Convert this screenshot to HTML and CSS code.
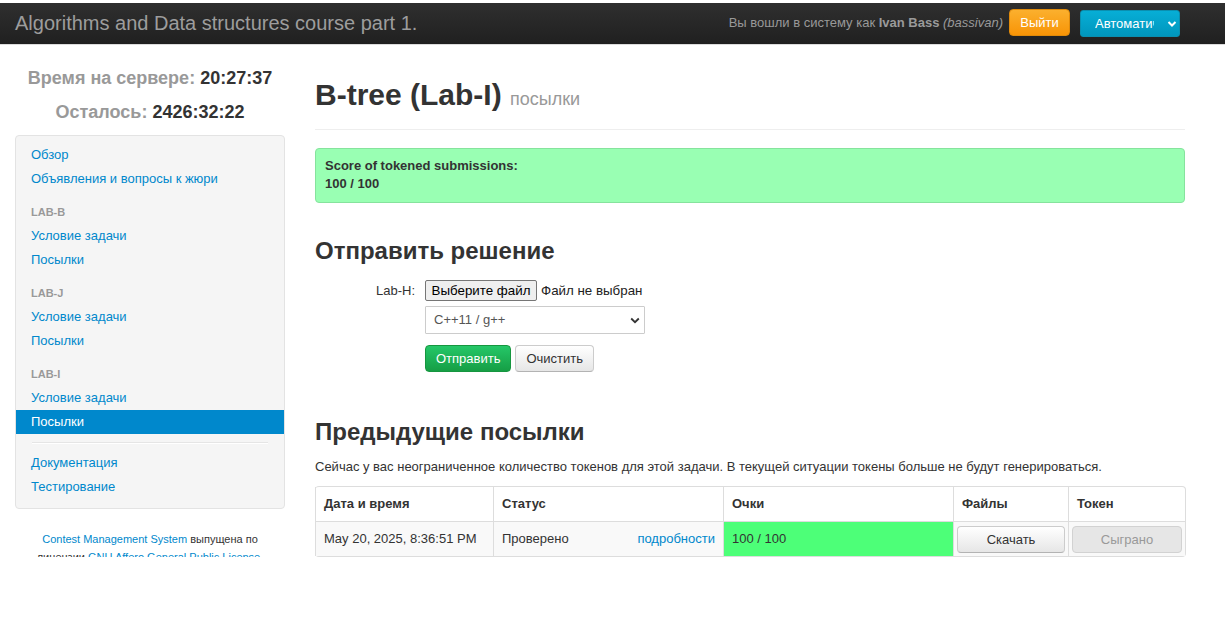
FILE: index.html
```html
<!DOCTYPE html>
<html lang="ru">
<head>
<meta charset="utf-8">
<title>B-tree (Lab-I)</title>
<link rel="stylesheet" href="styles.css">
</head>
<body>
<div class="navbar">
  <div class="brand">Algorithms and Data structures course part 1.</div>
  <div class="nav-right">
    <span class="login-text">Вы вошли в систему как <b>Ivan Bass</b> <i>(bassivan)</i></span>
    <span class="btn-warning">Выйти</span>
    <span class="lang-select"><span class="lang-text">Автоматически</span><svg class="lang-chev" width="10" height="8" viewBox="0 0 10 8"><path d="M1.5 2 L5 5.5 L8.5 2" fill="none" stroke="#fff" stroke-width="2"/></svg></span>
  </div>
</div>

<div class="layout">
  <div class="sidebar">
    <div class="timer"><span class="timer-label">Время на сервере:</span> <span class="timer-value">20:27:37</span></div>
    <div class="timer"><span class="timer-label">Осталось:</span> <span class="timer-value">2426:32:22</span></div>
    <div class="well">
      <a class="nav-item" href="#">Обзор</a>
      <a class="nav-item" href="#">Объявления и вопросы к жюри</a>
      <div class="nav-header">LAB-B</div>
      <a class="nav-item" href="#">Условие задачи</a>
      <a class="nav-item" href="#">Посылки</a>
      <div class="nav-header">LAB-J</div>
      <a class="nav-item" href="#">Условие задачи</a>
      <a class="nav-item" href="#">Посылки</a>
      <div class="nav-header">LAB-I</div>
      <a class="nav-item" href="#">Условие задачи</a>
      <a class="nav-item active" href="#">Посылки</a>
      <div class="divider"></div>
      <a class="nav-item" href="#">Документация</a>
      <a class="nav-item" href="#">Тестирование</a>
    </div>
    <div class="footer">
      <a href="#">Contest Management System</a> выпущена по лицензии <a href="#">GNU Affero General Public License</a>.
    </div>
  </div>

  <div class="main">
    <div class="page-header">
      <h1>B-tree (Lab-I) <small>посылки</small></h1>
    </div>

    <div class="alert">
      <div>Score of tokened submissions:</div>
      <div>100 / 100</div>
    </div>

    <h2 class="section-title first">Отправить решение</h2>
    <div class="form">
      <div class="form-row">
        <label class="form-label">Lab-H:</label>
        <div class="form-field">
          <span class="file-btn">Выберите файл</span>
          <span class="file-text">Файл не выбран</span>
        </div>
      </div>
      <div class="form-row row-select">
        <div class="form-label"></div>
        <div class="select">
          <span>C++11 / g++</span>
          <svg width="10" height="7" viewBox="0 0 10 7"><path d="M1.2 1.5 L5 5.2 L8.8 1.5" fill="none" stroke="#333" stroke-width="1.8"/></svg>
        </div>
      </div>
      <div class="form-row row-buttons">
        <div class="form-label"></div>
        <div class="buttons">
          <span class="btn btn-success">Отправить</span>
          <span class="btn">Очистить</span>
        </div>
      </div>
    </div>

    <h2 class="section-title second">Предыдущие посылки</h2>
    <p class="tokens-note">Сейчас у вас неограниченное количество токенов для этой задачи. В текущей ситуации токены больше не будут генерироваться.</p>

    <table class="subs">
      <colgroup>
        <col class="c-date"><col class="c-status"><col class="c-score"><col class="c-files"><col class="c-token">
      </colgroup>
      <thead>
        <tr><th>Дата и время</th><th>Статус</th><th>Очки</th><th>Файлы</th><th>Токен</th></tr>
      </thead>
      <tbody>
        <tr>
          <td>May 20, 2025, 8:36:51 PM</td>
          <td><div class="status"><span>Проверено</span><a href="#">подробности</a></div></td>
          <td class="score">100 / 100</td>
          <td class="btn-cell"><span class="btn btn-block">Скачать</span></td>
          <td class="btn-cell"><span class="btn btn-block disabled">Сыграно</span></td>
        </tr>
      </tbody>
    </table>
  </div>
</div>
</body>
</html>
```

FILE: styles.css
```css
html, body {
  margin: 0;
  padding: 0;
  background: #fff;
}
body {
  font-family: "Liberation Sans", Arial, Helvetica, sans-serif;
  font-size: 13px;
  line-height: 18px;
  color: #333;
}
a {
  color: #0088cc;
  text-decoration: none;
}

/* navbar */
.navbar {
  margin-top: 3px;
  height: 41px;
  background: linear-gradient(#2f2f2f, #202020);
  border-bottom: 1px solid #dcdcdc;
  display: flex;
  align-items: center;
  justify-content: space-between;
  padding: 0 45px 0 15px;
}
.brand {
  font-size: 20px;
  color: #9d9d9d;
  line-height: 24px;
  margin-top: -2px;
}
.nav-right {
  display: flex;
  align-items: center;
}
.login-text {
  color: #999;
  font-size: 13px;
  margin-right: 6px;
  margin-top: -2px;
}
.login-text b { color: #9a9a9a; }
.btn-warning {
  display: inline-block;
  box-sizing: border-box;
  width: 61px;
  height: 27px;
  line-height: 25px;
  text-align: center;
  color: #fff;
  font-size: 13px;
  background: linear-gradient(#fbb02e, #f89406);
  border: 1px solid #e08a0a;
  border-radius: 4px;
  margin-top: -3px;
}
.lang-select {
  display: inline-flex;
  align-items: center;
  box-sizing: border-box;
  width: 100px;
  height: 27px;
  margin-left: 10px;
  padding-left: 14px;
  background: linear-gradient(#07aed6, #0096bd);
  border: 1px solid #0a8fb0;
  border-radius: 3px;
  color: #fff;
  font-size: 13px;
}
.lang-text {
  width: 59px;
  overflow: hidden;
  white-space: nowrap;
}
.lang-chev {
  margin-left: 13px;
}

/* layout */
.layout {
  display: flex;
  gap: 30px;
  padding: 0 15px;
  height: 512px;
  overflow: hidden;
}
.sidebar {
  width: 270px;
  flex: none;
  padding-top: 16px;
}
.main {
  width: 870px;
  flex: none;
}

/* timers */
.timer {
  text-align: center;
  font-size: 18px;
  font-weight: bold;
  line-height: 34px;
}
.timer-label { color: #999; }
.timer-value { color: #333; }

/* well */
.well {
  margin-top: 6px;
  background: #f5f5f5;
  border: 1px solid #e3e3e3;
  border-radius: 4px;
  padding: 7px 0 9px;
}
.nav-item {
  display: block;
  padding: 3px 15px;
  line-height: 18px;
  color: #0088cc;
}
.nav-item.active {
  background: #0088cc;
  color: #fff;
}
.nav-header {
  margin-top: 9px;
  padding: 3px 15px;
  font-size: 11px;
  font-weight: bold;
  line-height: 18px;
  color: #999;
  text-transform: uppercase;
  text-shadow: 0 1px 0 rgba(255,255,255,.5);
}
.divider {
  height: 1px;
  margin: 8px 16px 7px;
  background: #e5e5e5;
  border-bottom: 1px solid #fff;
}
.footer {
  margin-top: 21px;
  text-align: center;
  font-size: 11px;
  line-height: 18px;
  padding: 0 10px;
}

/* main */
.page-header {
  margin-top: 30px;
  padding-bottom: 10px;
  border-bottom: 1px solid #eee;
}
h1 {
  margin: 0;
  font-size: 30px;
  line-height: 40px;
  font-weight: bold;
  color: #333;
}
h1 small {
  font-size: 18px;
  font-weight: normal;
  color: #999;
}
.alert {
  margin-top: 18px;
  background: #99ffb3;
  border: 1px solid #86e39d;
  border-radius: 4px;
  padding: 8px 9px 9px;
  font-weight: bold;
  color: #333;
}
.section-title {
  margin: 0;
  font-size: 24px;
  line-height: 30px;
  font-weight: bold;
  color: #333;
}
.section-title.first { margin-top: 33px; }
.section-title.second { margin-top: 45px; }

/* form */
.form { margin-top: 14px; }
.form-row {
  display: flex;
  align-items: center;
  gap: 10px;
}
.form-label {
  width: 100px;
  text-align: right;
  color: #333;
}
.form-field {
  display: flex;
  align-items: center;
}
.file-btn {
  display: inline-block;
  box-sizing: border-box;
  width: 112px;
  height: 21px;
  line-height: 19px;
  text-align: center;
  background: #efefef;
  border: 1px solid #767676;
  border-radius: 2px;
  color: #000;
  font-size: 13.33px;
}
.file-text {
  margin-left: 4px;
  font-size: 13.33px;
  color: #222;
}
.row-select { margin-top: 5px; }
.select {
  box-sizing: border-box;
  width: 220px;
  height: 28px;
  border: 1px solid #ccc;
  border-radius: 1px;
  background: #fff;
  display: flex;
  align-items: center;
  justify-content: space-between;
  padding: 0 4px 0 8px;
  color: #555;
}
.row-buttons { margin-top: 11px; }
.buttons {
  display: flex;
  gap: 4px;
}
.btn {
  display: inline-block;
  box-sizing: border-box;
  height: 27px;
  line-height: 25px;
  padding: 0 10px;
  text-align: center;
  color: #333;
  font-size: 13px;
  background: linear-gradient(#ffffff, #e6e6e6);
  border: 1px solid #ccc;
  border-bottom-color: #b3b3b3;
  border-radius: 4px;
}
.btn-success {
  color: #fff;
  background: linear-gradient(#25c768, #169e45);
  border-color: #16963f;
}
.tokens-note {
  margin: 11px 0 0;
}

/* table */
.subs {
  margin-top: 10px;
  width: 870px;
  table-layout: fixed;
  border-collapse: separate;
  border-spacing: 0;
  border: 1px solid #ddd;
  border-left: 0;
  border-radius: 4px;
}
.c-date { width: 178px; }
.c-status { width: 230px; }
.c-score { width: 230px; }
.c-files { width: 115px; }
.c-token { width: 117px; }
.subs th, .subs td {
  border-left: 1px solid #ddd;
  padding: 8px;
  line-height: 18px;
  text-align: left;
  vertical-align: middle;
}
.subs th {
  font-weight: bold;
}
.subs td {
  border-top: 1px solid #ddd;
  background: #f9f9f9;
}
.status {
  display: flex;
  justify-content: space-between;
}
.subs td.score {
  background: #4dff78;
}
.subs td.btn-cell {
  padding: 3px 3px;
}
.btn-block {
  display: block;
  width: 100%;
  height: 27px;
}
.btn.disabled {
  color: #999;
  background: #e6e6e6;
  border-color: #d2d2d2;
}
```
